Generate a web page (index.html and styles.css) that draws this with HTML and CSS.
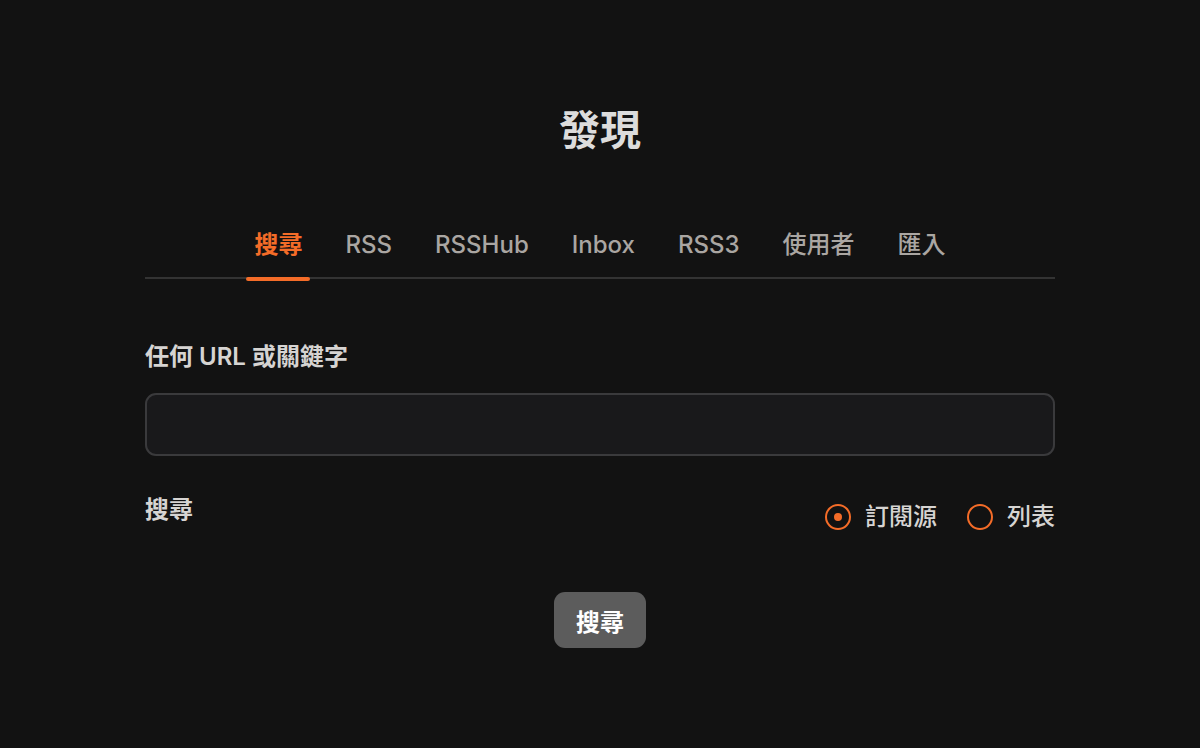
FILE: index.html
```html
<!DOCTYPE html>
<html lang="zh-Hant">
<head>
    <meta charset="UTF-8">
    <meta name="viewport" content="width=device-width, initial-scale=1.0">
    <title>發現</title>
    <link rel="stylesheet" href="styles.css">
</head>
<body>
    <main class="discover">
        <h1 class="title">發現</h1>
        <nav class="tabs">
            <div class="tab-list">
                <span class="tab active">搜尋</span>
                <span class="tab">RSS</span>
                <span class="tab">RSSHub</span>
                <span class="tab">Inbox</span>
                <span class="tab">RSS3</span>
                <span class="tab">使用者</span>
                <span class="tab">匯入</span>
            </div>
        </nav>
        <form class="search-form">
            <label class="field-label" for="keyword">任何 URL 或關鍵字</label>
            <input class="field-input" type="text" id="keyword">
            <div class="type-row">
                <span class="field-label">搜尋</span>
                <div class="radios">
                    <label class="radio checked"><span class="dot"></span>訂閱源</label>
                    <label class="radio"><span class="dot"></span>列表</label>
                </div>
            </div>
            <div class="actions">
                <button class="submit" type="button">搜尋</button>
            </div>
        </form>
    </main>
</body>
</html>
```

FILE: styles.css
```css
body {
    margin: 0;
    background: #121212;
    font-family: Inter, "Noto Sans CJK TC", sans-serif;
    color: #d6d4d2;
}

.discover {
    width: 910px;
    margin: 0 auto;
    padding-top: 102px;
}

.title {
    margin: 0;
    text-align: center;
    font-size: 41px;
    line-height: 56px;
    font-weight: 700;
    color: #dcdcdc;
}

.tabs {
    margin-top: 71px;
    border-bottom: 2px solid #333333;
}

.tab-list {
    display: flex;
    justify-content: center;
    gap: 27px;
}

.tab {
    position: relative;
    padding: 0 8px 16px;
    font-size: 24px;
    line-height: 32px;
    font-weight: 500;
    color: #aaa6a2;
}

.tab.active {
    color: #f46c28;
    font-weight: 600;
}

.tab.active::after {
    content: "";
    position: absolute;
    left: 0;
    right: 0;
    bottom: -4px;
    height: 4px;
    border-radius: 2px;
    background: #f46c28;
}

.search-form {
    padding-top: 62px;
}

.field-label {
    display: block;
    font-size: 24px;
    line-height: 32px;
    font-weight: 600;
    color: #d6d4d2;
}

.field-input {
    display: block;
    box-sizing: border-box;
    width: 100%;
    height: 63px;
    margin-top: 20px;
    background: #19191b;
    border: 2px solid #3a3a3c;
    border-radius: 11px;
    outline: none;
}

.type-row {
    display: flex;
    justify-content: space-between;
    margin-top: 38px;
}

.radios {
    display: flex;
    gap: 30px;
    padding-top: 7px;
}

.radio {
    display: flex;
    align-items: center;
    gap: 14px;
    font-size: 24px;
    line-height: 32px;
    font-weight: 500;
    color: #d6d4d2;
}

.dot {
    box-sizing: border-box;
    width: 26px;
    height: 26px;
    border: 2px solid #f46c28;
    border-radius: 50%;
    display: flex;
    align-items: center;
    justify-content: center;
}

.radio.checked .dot::after {
    content: "";
    width: 8px;
    height: 8px;
    border-radius: 50%;
    background: #f46c28;
}

.actions {
    display: flex;
    justify-content: center;
    margin-top: 59px;
}

.submit {
    width: 92px;
    height: 56px;
    border: none;
    border-radius: 11px;
    background: #5c5c5c;
    color: #ffffff;
    font-family: inherit;
    font-size: 24px;
    font-weight: 700;
}
```
